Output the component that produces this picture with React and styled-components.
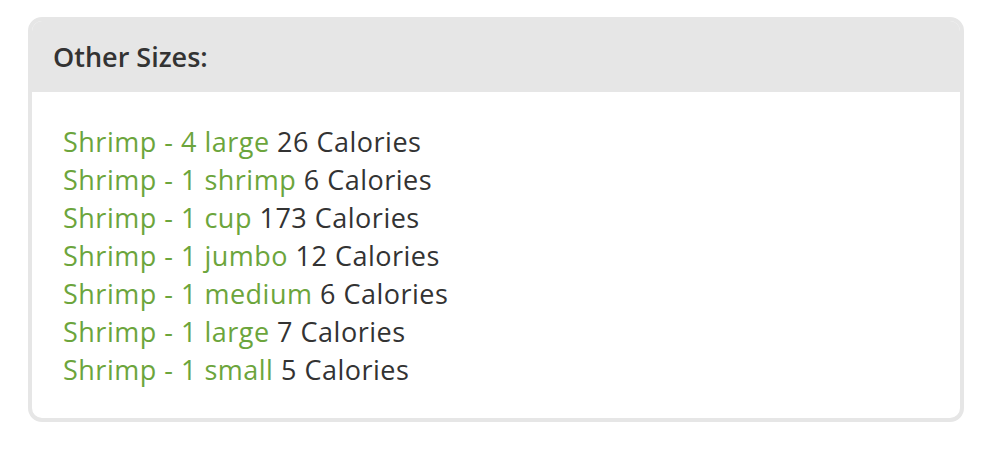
import React from "react";
import styled, { createGlobalStyle } from "styled-components";

const Global = createGlobalStyle`
  html, body { margin: 0; padding: 0; background: #ffffff; }
  body { font-family: "Open Sans", "Liberation Sans", sans-serif; }
`;

const Page = styled.div`
  padding: 17px 36px 0 28px;
`;

const Card = styled.section`
  width: 936px;
  box-sizing: border-box;
  border: 4px solid #e6e6e6;
  border-radius: 14px;
  overflow: hidden;
  background: #ffffff;
`;

const Header = styled.h3`
  margin: 0;
  height: 71px;
  display: flex;
  align-items: center;
  padding: 0 21px;
  background: #e6e6e6;
  color: #333333;
  font-size: 27px;
  font-weight: 600;
`;

const List = styled.ul`
  list-style: none;
  margin: 0;
  padding: 31px 31px 29px;
`;

const Item = styled.li`
  font-size: 27px;
  letter-spacing: 0.5px;
  line-height: 38px;
  color: #333333;
`;

const Link = styled.a`
  color: #6ca53c;
  text-decoration: none;
`;

const items = [
  ["Shrimp - 4 large", 26],
  ["Shrimp - 1 shrimp", 6],
  ["Shrimp - 1 cup", 173],
  ["Shrimp - 1 jumbo", 12],
  ["Shrimp - 1 medium", 6],
  ["Shrimp - 1 large", 7],
  ["Shrimp - 1 small", 5],
];

export default function App() {
  return (
    <Page>
      <Global />
      <Card>
        <Header>Other Sizes:</Header>
        <List>
          {items.map(([name, cal]) => (
            <Item key={name}>
              <Link href="#">{name}</Link> {cal} Calories
            </Item>
          ))}
        </List>
      </Card>
    </Page>
  );
}
